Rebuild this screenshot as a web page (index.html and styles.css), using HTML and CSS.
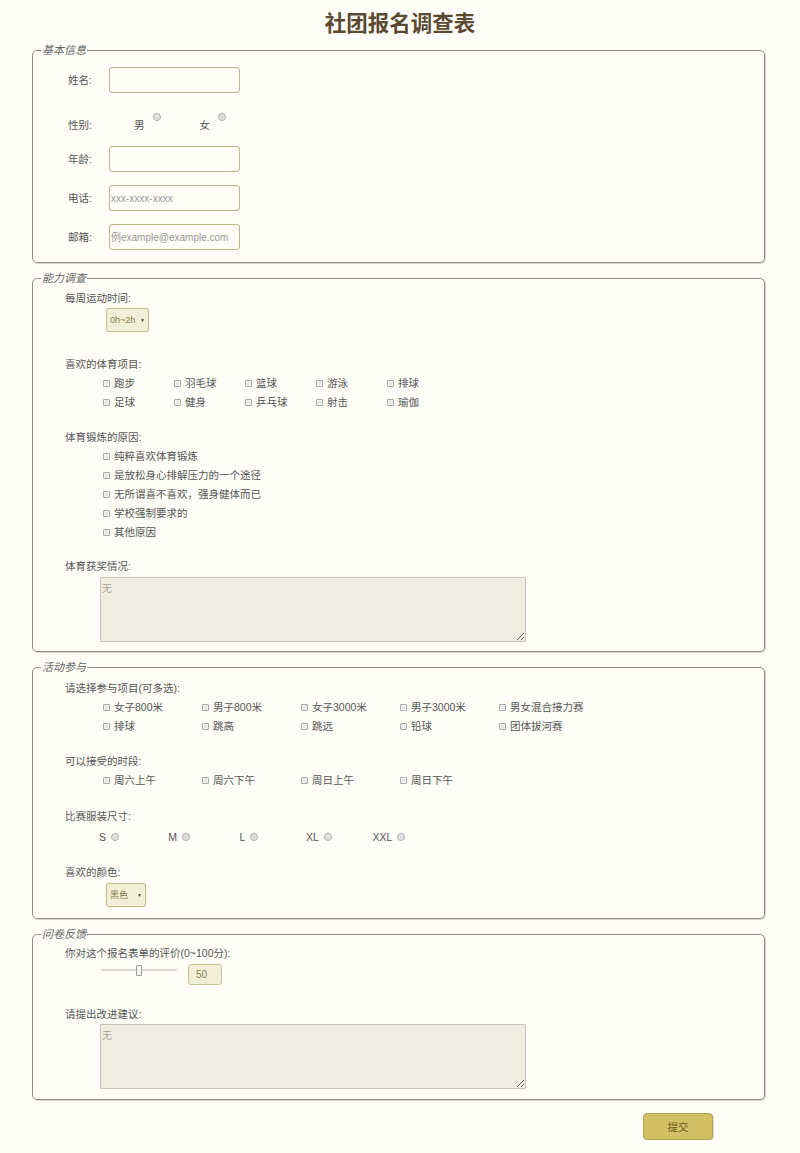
FILE: index.html
```html
<!DOCTYPE html>
<html lang="zh-CN">
<head>
<meta charset="utf-8">
<title>社团报名调查表</title>
<link rel="stylesheet" href="styles.css">
</head>
<body>
<h1 class="title">社团报名调查表</h1>
<form class="form">
  <fieldset class="group g1">
    <legend class="legend">基本信息</legend>
    <div class="row r-name"><label class="lbl">姓名:</label><input class="text" type="text"></div>
    <div class="row r-gender"><span class="lbl">性别:</span>
      <label class="gopt g-first">男<input class="radio g-radio" type="radio" name="sex"></label>
      <label class="gopt g-second">女<input class="radio g-radio" type="radio" name="sex"></label>
    </div>
    <div class="row r-age"><label class="lbl">年龄:</label><input class="text" type="text"></div>
    <div class="row r-tel"><label class="lbl">电话:</label><input class="text ph-tel" type="text" placeholder="xxx-xxxx-xxxx"></div>
    <div class="row r-mail"><label class="lbl">邮箱:</label><input class="text ph-mail" type="text" placeholder="例example@example.com"></div>
  </fieldset>

  <fieldset class="group g2">
    <legend class="legend">能力调查</legend>
    <div class="sub s-time">每周运动时间:</div>
    <div class="sel sel-time"><select class="sel-box"><option>0h~2h</option></select><span class="sel-arrow">▼</span></div>
    <div class="sub s-sport">喜欢的体育项目:</div>
    <div class="grid grid-sport">
      <label class="item"><input class="cb" type="checkbox">跑步</label>
      <label class="item"><input class="cb" type="checkbox">羽毛球</label>
      <label class="item"><input class="cb" type="checkbox">篮球</label>
      <label class="item"><input class="cb" type="checkbox">游泳</label>
      <label class="item"><input class="cb" type="checkbox">排球</label>
      <label class="item"><input class="cb" type="checkbox">足球</label>
      <label class="item"><input class="cb" type="checkbox">健身</label>
      <label class="item"><input class="cb" type="checkbox">乒乓球</label>
      <label class="item"><input class="cb" type="checkbox">射击</label>
      <label class="item"><input class="cb" type="checkbox">瑜伽</label>
    </div>
    <div class="sub s-reason">体育锻炼的原因:</div>
    <div class="list">
      <label class="item"><input class="cb" type="checkbox">纯粹喜欢体育锻炼</label>
      <label class="item"><input class="cb" type="checkbox">是放松身心排解压力的一个途径</label>
      <label class="item"><input class="cb" type="checkbox">无所谓喜不喜欢，强身健体而已</label>
      <label class="item"><input class="cb" type="checkbox">学校强制要求的</label>
      <label class="item"><input class="cb" type="checkbox">其他原因</label>
    </div>
    <div class="sub s-award">体育获奖情况:</div>
    <textarea class="area area-award" placeholder="无"></textarea>
  </fieldset>

  <fieldset class="group g3">
    <legend class="legend">活动参与</legend>
    <div class="sub s-event">请选择参与项目(可多选):</div>
    <div class="grid grid-event">
      <label class="item"><input class="cb" type="checkbox">女子800米</label>
      <label class="item"><input class="cb" type="checkbox">男子800米</label>
      <label class="item"><input class="cb" type="checkbox">女子3000米</label>
      <label class="item"><input class="cb" type="checkbox">男子3000米</label>
      <label class="item"><input class="cb" type="checkbox">男女混合接力赛</label>
      <label class="item"><input class="cb" type="checkbox">排球</label>
      <label class="item"><input class="cb" type="checkbox">跳高</label>
      <label class="item"><input class="cb" type="checkbox">跳远</label>
      <label class="item"><input class="cb" type="checkbox">铅球</label>
      <label class="item"><input class="cb" type="checkbox">团体拔河赛</label>
    </div>
    <div class="sub s-slot">可以接受的时段:</div>
    <div class="grid grid-event grid-slot">
      <label class="item"><input class="cb" type="checkbox">周六上午</label>
      <label class="item"><input class="cb" type="checkbox">周六下午</label>
      <label class="item"><input class="cb" type="checkbox">周日上午</label>
      <label class="item"><input class="cb" type="checkbox">周日下午</label>
    </div>
    <div class="sub s-size">比赛服装尺寸:</div>
    <div class="sizes">
      <label class="size">S<input class="radio" type="radio" name="size"></label>
      <label class="size">M<input class="radio" type="radio" name="size"></label>
      <label class="size">L<input class="radio" type="radio" name="size"></label>
      <label class="size">XL<input class="radio" type="radio" name="size"></label>
      <label class="size">XXL<input class="radio" type="radio" name="size"></label>
    </div>
    <div class="sub s-color">喜欢的颜色:</div>
    <div class="sel sel-color"><select class="sel-box"><option>黑色</option></select><span class="sel-arrow">▼</span></div>
  </fieldset>

  <fieldset class="group g4">
    <legend class="legend">问卷反馈</legend>
    <div class="sub s-rate">你对这个报名表单的评价(0~100分):</div>
    <div class="rate-row">
      <input class="range" type="range" min="0" max="100" value="50">
      <input class="score" type="text" value="50" readonly>
    </div>
    <div class="sub s-advice">请提出改进建议:</div>
    <textarea class="area area-advice" placeholder="无"></textarea>
  </fieldset>

  <div class="actions"><button class="submit" type="button">提交</button></div>
</form>
</body>
</html>
```

FILE: styles.css
```css
html, body {
  margin: 0;
  padding: 0;
  background: #fefdf7;
}
body {
  font-family: "Liberation Sans", "Noto Sans CJK SC", sans-serif;
  font-size: 10.5px;
  color: #555;
}
.title {
  margin: 6px 0 4px;
  height: 32px;
  line-height: 32px;
  text-align: center;
  font-size: 21.5px;
  font-weight: bold;
  color: #5b4a32;
  font-family: "Noto Sans CJK SC", sans-serif;
}
.form {
  margin: 0 0 0 32px;
  width: 733px;
}
.group {
  box-sizing: border-box;
  width: 733px;
  margin: 0 0 7px;
  padding: 0;
  border: 1px solid #8f8f87;
  border-radius: 5px;
  box-shadow: 1px 1px 1px rgba(0, 0, 0, 0.18);
  min-inline-size: 0;
}
.legend {
  margin-left: 8px;
  padding: 0 1px;
  font-size: 11px;
  line-height: 16px;
  font-style: italic;
  color: #666;
}

/* section 1 */
.row {
  display: flex;
  align-items: center;
  margin-left: 35px;
  height: 26px;
}
.lbl {
  width: 41px;
  line-height: 16px;
  color: #555;
}
.r-name { margin-top: 9px; }
.r-gender { margin-top: 19px; }
.r-age { margin-top: 8px; }
.r-tel, .r-mail { margin-top: 13px; }
.g1 { padding-bottom: 12px; }

.text {
  box-sizing: border-box;
  width: 131px;
  height: 26px;
  margin: 0;
  padding: 0 0 0 1px;
  border: 1px solid #bdb78a;
  border-radius: 3px;
  background: #fefdf7;
  box-shadow: inset 0 0 1px rgba(150, 140, 90, 0.3);
  font-family: "Liberation Sans", "Noto Sans CJK SC", sans-serif;
  font-size: 10.5px;
  color: #555;
  outline: none;
}
.text::placeholder { color: #999; }
.ph-tel { font-size: 10px; }
.ph-mail { font-size: 10px; }

.gopt {
  display: flex;
  align-items: center;
  line-height: 16px;
}
.g-first { margin-left: 25px; }
.g-second { margin-left: 39px; }

.radio {
  appearance: none;
  -webkit-appearance: none;
  box-sizing: border-box;
  width: 8px;
  height: 8px;
  margin: 0;
  border: 1px solid #b0b0b0;
  border-radius: 50%;
  background: #dedede;
  box-shadow: inset 0 0 1px #fff;
}
.g-radio {
  margin: 0 0 16px 8px;
}

/* generic sub labels */
.sub {
  margin-left: 32px;
  line-height: 16px;
  height: 16px;
  color: #555;
}
.s-time { margin-top: 4px; }
.s-sport { margin-top: 24px; }
.s-reason { margin-top: 17px; }
.s-award { margin-top: 16px; }
.s-event { margin-top: 5px; }
.s-slot { margin-top: 17px; }
.s-size { margin-top: 18px; }
.s-color { margin-top: 17px; }
.s-rate { margin-top: 3px; }
.s-advice { margin-top: 21px; }

/* select */
.sel {
  position: relative;
  height: 24px;
  margin-left: 73px;
}
.sel-time { width: 43px; margin-top: 2px; }
.sel-color { width: 40px; margin-top: 3px; }
.sel-box {
  appearance: none;
  -webkit-appearance: none;
  box-sizing: border-box;
  width: 100%;
  height: 100%;
  margin: 0;
  padding: 0 0 0 3px;
  border: 1px solid #c3bd8b;
  border-radius: 3px;
  background: #f2efd8;
  box-shadow: 0 0 1px rgba(120, 110, 60, 0.35);
  font-family: "Liberation Sans", "Noto Sans CJK SC", sans-serif;
  font-size: 9px;
  color: #857844;
  outline: none;
}
.sel-arrow {
  position: absolute;
  right: 4px;
  top: 9px;
  font-size: 5px;
  line-height: 6px;
  color: #444;
  pointer-events: none;
}

/* checkbox grids */
.grid {
  display: flex;
  flex-wrap: wrap;
  margin: 2px 0 0 70px;
}
.grid-sport { width: 360px; }
.grid-sport .item { width: 71px; }
.grid-event { width: 500px; }
.grid-event .item { width: 99px; }
.item {
  display: flex;
  align-items: center;
  height: 19px;
  line-height: 19px;
  color: #555;
  white-space: nowrap;
}
.cb {
  appearance: none;
  -webkit-appearance: none;
  box-sizing: border-box;
  width: 7px;
  height: 7px;
  margin: 0 4px 0 0;
  border: 1px solid #a8a8a8;
  border-radius: 1px;
  background: #e6e6e6;
  box-shadow: inset 0 0 0 1px #f2f2f2;
}
.list {
  margin: 2px 0 0 70px;
}

/* textareas */
.area {
  display: block;
  box-sizing: border-box;
  width: 426px;
  height: 65px;
  margin-left: 67px;
  padding: 2px 1px;
  border: 1px solid #c6c4ba;
  border-radius: 1px;
  background: #efede1;
  font-family: "Liberation Sans", "Noto Sans CJK SC", sans-serif;
  font-size: 10px;
  color: #555;
  outline: none;
}
.area::placeholder { color: #a8a597; }
.area-award { margin-top: 3px; }
.area-advice { margin-top: 2px; }
.g2 { padding-bottom: 9px; }
.g3 { padding-bottom: 11px; }
.g4 { padding-bottom: 10px; }

/* sizes */
.sizes {
  display: flex;
  margin: 3px 0 0 41px;
  height: 20px;
}
.size {
  width: 70px;
  display: flex;
  align-items: center;
  justify-content: center;
  color: #555;
  font-size: 10.5px;
}
.size .radio { margin-left: 5px; }

/* rating */
.rate-row {
  display: flex;
  align-items: flex-start;
  margin-top: 2px;
  height: 22px;
}
.range {
  appearance: none;
  -webkit-appearance: none;
  width: 76px;
  height: 14px;
  margin: 0 0 0 68px;
  padding: 0;
  background: transparent;
}
.range::-webkit-slider-runnable-track {
  height: 2px;
  background: #d9d8cf;
  border-radius: 1px;
}
.range::-webkit-slider-thumb {
  appearance: none;
  -webkit-appearance: none;
  box-sizing: border-box;
  width: 6px;
  height: 11px;
  margin-top: -4.5px;
  border: 1px solid #9c9c98;
  border-radius: 1px;
  background: #f3f3ef;
}
.score {
  box-sizing: border-box;
  width: 34px;
  height: 21px;
  margin: 1px 0 0 11px;
  padding: 0 0 0 7px;
  border: 1px solid #cac38d;
  border-radius: 3px;
  background: #f1eed6;
  font-family: "Liberation Sans", sans-serif;
  font-size: 10px;
  color: #8a7d4c;
  outline: none;
}

/* submit */
.actions {
  display: flex;
  margin-top: 13px;
}
.submit {
  box-sizing: border-box;
  width: 70px;
  height: 27px;
  margin-left: 611px;
  border: 1px solid #b6a453;
  border-radius: 4px;
  background: #d3c064;
  box-shadow: 1px 1px 1px rgba(0, 0, 0, 0.15);
  font-family: "Noto Sans CJK SC", sans-serif;
  font-size: 10.5px;
  color: #6a5a22;
}
```
